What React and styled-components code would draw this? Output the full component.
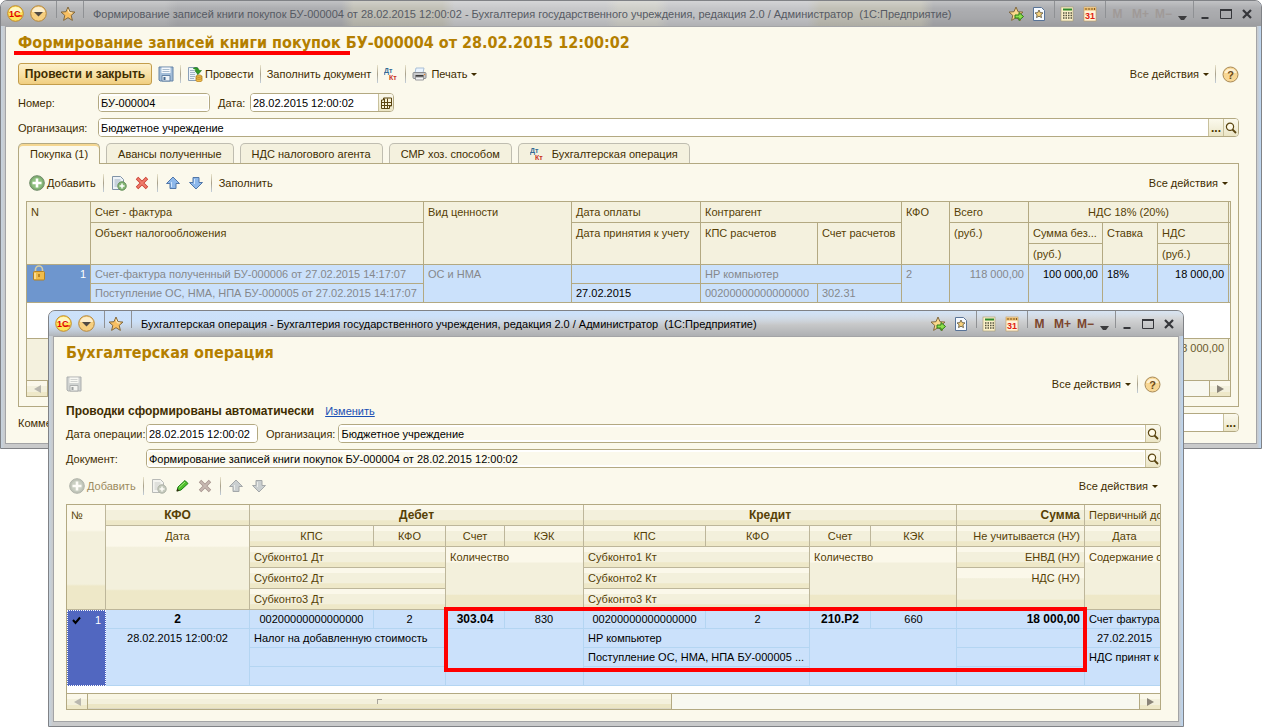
import React from 'react';
import styled, { createGlobalStyle, css } from 'styled-components';

const GlobalStyle = createGlobalStyle`
  * {
    box-sizing: border-box;
  }

  body {
    margin: 0;
    background: #ffffff;
    font-family: 'Liberation Sans', Arial, sans-serif;
    font-size: 11px;
    line-height: 16px;
    color: #3f2d00;
  }

  button,
  input {
    font: inherit;
    color: inherit;
    margin: 0;
  }

  svg {
    display: block;
    flex: none;
  }
`;

const boldFont = css`
  font-size: 12px;
  font-weight: bold;
`;

const Desktop = styled.div`
  position: relative;
  min-height: 100vh;
  overflow: hidden;
`;

const WindowFrame = styled.section`
  position: absolute;
  top: ${(p) => p.$top};
  left: ${(p) => p.$left};
  right: ${(p) => p.$right};
  padding: 0 4px 4px;
  border: 1px solid #808286;
  border-radius: 7px 7px 0 0;
  background: linear-gradient(90deg, #c6d3df, #c9cacb 4px, #c9cacb calc(100% - 4px), #bcd6f2);
`;

const TitleBar = styled.header`
  display: flex;
  align-items: center;
  height: 25px;
  margin: 0 -4px;
  padding: 0 4px 0 5px;
  border-radius: 6px 6px 0 0;
  color: ${(p) => (p.$active ? '#000000' : '#565a63')};
  background: ${(p) =>
    p.$active
      ? 'linear-gradient(179deg, rgba(203, 225, 251, 0.95) 25%, rgba(203, 225, 251, 0) 60%), linear-gradient(180deg, #e2e6ea, #c9cacb 50%, #aeb0b2)'
      : 'linear-gradient(180deg, rgba(255, 255, 255, 0.25), transparent 30%, rgba(0, 0, 0, 0.04) 70%, rgba(0, 0, 0, 0.1)), linear-gradient(90deg, #b7b8ba 0 13%, #adaeb1 14% 27%, #c1c0b6 28% 35%, #c7c8ca 36% 48%, #cfcfc9 49% 52%, #c4c5c8 53% 64%, #c1c0b6 65% 73%, #adaeb1 74%)'};
`;

const WindowTitle = styled.div`
  flex: 1;
  min-width: 0;
  overflow: hidden;
  white-space: pre;
  padding-left: 9px;
`;

const TitleButton = styled.button`
  ${boldFont}
  display: flex;
  align-items: center;
  justify-content: center;
  flex: none;
  width: ${(p) => p.$width || 23}px;
  height: 20px;
  padding: 0;
  border: 0;
  background: none;
  color: ${(p) => (p.disabled ? '#a09a98' : '#7b452d')};
`;

const TitleSeparator = styled.span`
  flex: none;
  align-self: flex-start;
  width: 5px;
  height: 17px;
  border-right: 1px solid #8f9194;
`;

const WindowBody = styled.div`
  border: 1px solid #a3a4a6;
  background: #fbf9ec;
  padding: 6px 17px 11px 12px;
`;

const Heading = styled.h1`
  font-family: 'DejaVu Sans Condensed', 'DejaVu Sans', sans-serif;
  font-stretch: condensed;
  font-weight: bold;
  font-size: 16px;
  line-height: 20px;
  margin: 0 0 10px;
  color: #b47f00;
  white-space: nowrap;
`;

const Underlined = styled.span`
  position: relative;

  &::after {
    content: '';
    position: absolute;
    left: -4px;
    right: -9px;
    bottom: -3px;
    height: 4px;
    background: #ff0000;
  }
`;

const CommandBar = styled.div`
  display: flex;
  align-items: center;
  gap: 6px;
  height: 22px;
`;

const TableBar = styled(CommandBar)`
  gap: 7px;
  height: 36px;
  padding: 0 3px;
`;

const Spacer = styled.div`
  flex: 1;
`;

const Separator = styled.span`
  width: 1px;
  height: 18px;
  background: linear-gradient(180deg, #e9e4cc, #a9a18a 50%, #c3cfdc);
`;

const PrimaryButton = styled.button`
  ${boldFont}
  width: 134px;
  height: 22px;
  padding: 0;
  border: 1px solid #c39d4b;
  border-radius: 3px;
  background: linear-gradient(180deg, #fcf0cd, #f7e0a3 55%, #f0ce80);
  color: #3f2d00;
  white-space: nowrap;
`;

const Command = styled.button`
  display: flex;
  align-items: center;
  gap: ${(p) => p.$gap || 2}px;
  padding: 0;
  border: 0;
  background: none;
  white-space: nowrap;
  color: ${(p) => (p.disabled ? '#9b8b5f' : '#3f2d00')};

  svg {
    opacity: ${(p) => (p.disabled ? 0.6 : 1)};
    filter: ${(p) => (p.disabled ? 'grayscale(0.8)' : 'none')};
  }
`;

const Row = styled.div`
  display: flex;
  align-items: center;
  min-height: ${(p) => p.$height || 19}px;
  margin-top: ${(p) => p.$top || 6}px;
`;

const Label = styled.label`
  flex: none;
  width: ${(p) => (p.$wide ? '80px' : 'auto')};
  min-width: 29px;
  margin: ${(p) => (p.$wide ? '0' : '0 3px 0 8px')};
  white-space: nowrap;
`;

const Field = styled.div`
  display: flex;
  flex: ${(p) => (p.$width ? `0 0 ${p.$width}px` : 1)};
  min-width: 0;
  height: 19px;
  border: 1px solid #b3a982;
  border-radius: 4px;
  overflow: hidden;
  background: ${(p) => (p.$plain ? '#fbf9ec' : '#ffffff')};

  input {
    flex: 1;
    min-width: 0;
    height: 17px;
    padding: 0 1px;
    border: 1px solid #ffffff;
    border-width: 2px 1px;
    background: transparent;
    color: #000000;
    outline: none;
  }
`;

const FieldButton = styled.button`
  display: flex;
  align-items: center;
  justify-content: center;
  flex: none;
  width: 15px;
  padding: 0;
  border: 0;
  border-left: 1px solid #c9c19c;
  background: linear-gradient(180deg, #fbf9ec, #f3f0dc 50%, #ebe5c4);
  color: #4c3800;
`;

const MoreButton = styled(FieldButton)`
  ${boldFont}
`;

const Tabs = styled.div`
  display: flex;
  gap: 6px;
  margin-top: 6px;
`;

const Tab = styled.button`
  position: relative;
  display: flex;
  align-items: center;
  gap: 7px;
  height: ${(p) => (p.$active ? 21 : 20)}px;
  margin-bottom: ${(p) => (p.$active ? -1 : 0)}px;
  padding: 0 11px;
  border: 1px solid ${(p) => (p.$active ? '#b3a982' : '#bfbdb0')};
  border-bottom: 0;
  border-radius: 5px 5px 0 0;
  background: ${(p) => (p.$active ? '#fbf9ec' : '#f4f1de')};
  box-shadow: ${(p) => (p.$active ? 'inset 0 2px #f5d791' : 'none')};
  white-space: nowrap;
  color: #3f2d00;
`;

const TabPanel = styled.div`
  border: 1px solid #b3a982;
  padding: 1px 7px 9px;
`;

const Grid = styled.div`
  border: 1px solid #b3a982;
  background: #ffffff;
  overflow: hidden;
`;

const Table = styled.table`
  width: 100%;
  table-layout: fixed;
  border-collapse: separate;
  border-spacing: 0;

  th,
  td {
    padding: 0 4px;
    text-align: left;
    vertical-align: top;
    font-weight: normal;
    white-space: nowrap;
    overflow: hidden;
  }

  th {
    height: 21px;
    line-height: 20px;
    color: #563f05;
  }

  td {
    height: 19px;
    line-height: 18px;
    color: #000000;
  }
`;

const PurchaseTable = styled(Table)`
  th,
  td {
    border-right: 1px solid #b3a982;
    border-bottom: 1px solid #b3a982;
  }

  th {
    background: #f4f1de;
  }

  td {
    background: #cbe1fb;
  }
`;

const EntryTable = styled(Table)`
  th {
    border-right: 1px solid #bdb69a;
    border-bottom: 1px solid #bdb69a;
    background: linear-gradient(180deg, #fbf8ea 24%, #f3f0dc 26% 76%, #eee8c8 78%);
  }

  td {
    border-right: 1px solid #b4d5f2;
    border-bottom: 1px solid #b4d5f2;
    background: #cbe1fb;
  }

  tr > .edge {
    border-right: 0;
    padding-right: 0;
  }
`;

const Head = styled.th`
  &&& {
    ${(p) => p.$bold && boldFont}
    text-align: ${(p) => p.$align || 'left'};
  }
`;

const Cell = styled.td`
  &&& {
    ${(p) => p.$bold && boldFont}
    text-align: ${(p) => p.$align || 'left'};
    color: ${(p) => (p.$muted ? '#85888c' : '#000000')};
  }
`;

const Edge = styled.td`
  &&& {
    padding: 0;
    border-right: 0;
  }
`;

const EdgeHead = styled.th`
  &&& {
    padding: 0;
    border-right: 0;
  }
`;

const RowMark = styled.td`
  &&& {
    background: ${(p) => (p.$focused ? '#5167c0' : '#6e96ce')};
    border: ${(p) => (p.$focused ? '1px dotted #ffffff' : '')};
    color: #ffffff;
  }
`;

const MarkLine = styled.div`
  display: flex;
  justify-content: space-between;
`;

const Blank = styled.td`
  &&& {
    height: ${(p) => p.$height}px;
    padding: 0;
    border-right: 0;
    border-bottom: ${(p) => (p.$line ? '1px solid #b3a982' : '0')};
    background: #ffffff;
  }
`;

const Total = styled.td`
  &&& {
    height: 41px;
    padding: ${(p) => (p.$edge ? '0' : '0 4px')};
    border-right-width: ${(p) => (p.$edge ? 0 : 1)}px;
    border-bottom: 0;
    background: #f4f1de;
    color: #6b5a2c;
    text-align: right;
  }
`;

const ScrollBar = styled.div`
  display: flex;
  height: 16px;
  border-top: 1px solid #b3a982;
  background: #f8f8f0;
`;

const ScrollButton = styled.button`
  display: flex;
  align-items: center;
  justify-content: center;
  flex: none;
  width: 21px;
  padding: 0;
  border: 0 solid #b3a982;
  border-width: ${(p) => (p.$end ? '0 0 0 1px' : '0 1px 0 0')};
  background: linear-gradient(180deg, #fbf8ea 30%, #f3f0dc 32% 70%, #eee8c8 72%);
`;

const ScrollThumb = styled.div`
  display: flex;
  align-items: center;
  justify-content: center;
  flex: 584;
  border-right: 1px solid #b3a982;
  background: linear-gradient(180deg, #f9f6e4 30%, #f3f0dc 32% 65%, #ebe5c4 68% 90%, #d5d2c4);

  &::before {
    content: '';
    width: 4px;
    height: 4px;
    border: 1px solid #a9a59a;
    border-width: 1px 0 0 1px;
  }
`;

const ScrollTrack = styled.div`
  flex: 468;
`;

// sits over the table rows, anchored to the grid's scroll area
const EntryArea = styled.div`
  position: relative;
`;

const Highlight = styled.div`
  position: absolute;
  left: 377px;
  top: 102px;
  width: 643px;
  height: 65px;
  border: 4px solid #ff0000;
  pointer-events: none;
`;

const InfoText = styled.strong`
  ${boldFont}
  margin-right: 11px;
`;

const Link = styled.a`
  color: #1a50b4;
  text-decoration: underline;
`;

/* ---------- icons ---------- */

const LogoIcon = () => (
  <svg width='17' height='17' viewBox='0 0 17 17'>
    <circle cx='8.5' cy='8.5' r='7.8' fill='#ffe25a' stroke='#c08a2a' />
    <path d='M2 7a6.6 6 0 0 1 13 0c-4 1.5-9 1.5-13 0z' fill='#fff7c0' />
    <text x='2' y='11.5' fontFamily='Liberation Sans' fontWeight='bold' fontSize='9' fill='#e00000'>
      1С
    </text>
    <path d='M9 11h6' stroke='#e00000' />
  </svg>
);

const MenuIcon = () => (
  <svg width='17' height='17' viewBox='0 0 17 17'>
    <circle cx='8.5' cy='8.5' r='7.8' fill='#f6cf80' stroke='#b5873c' />
    <path d='M2 7a6.6 6 0 0 1 13 0z' fill='#fdeecb' />
    <path d='M4 7h9l-4.5 4.500z' fill='#4f4a44' />
  </svg>
);

const starPath = 'M8 1l2 4.700 5 .4-3.800 3.300 1.200 5L8 11.700l-4.400 2.700 1.200-5L1 6.100l5-.4z';

const StarIcon = () => (
  <svg width='16' height='16' viewBox='0 0 16 16'>
    <path d={starPath} fill='#f8c063' stroke='#80683f' />
    <path d='M8 3.500l1.300 3.200 3 .3' stroke='#fff1cc' fill='none' />
  </svg>
);

const StarArrowIcon = () => (
  <svg width='16' height='16' viewBox='0 0 16 16'>
    <path d={starPath} fill='#fbd98c' stroke='#80683f' />
    <path d='M7 9h4V6.500l4.500 4-4.500 4V12H7z' fill='#8ee04d' stroke='#2b7a16' />
  </svg>
);

const PageStarIcon = () => (
  <svg width='16' height='16' viewBox='0 0 16 16'>
    <path d='M2.500 1.500h8l3 3v10h-11z' fill='#f6faff' stroke='#587397' />
    <path d='M8 4l1.200 2.600 2.800.3-2.100 1.900.6 2.800L8 10.200l-2.500 1.400.6-2.800L4 6.900l2.800-.3z' fill='#f8d27c' stroke='#5c5238' strokeWidth='.8' />
  </svg>
);

const CalcIcon = () => (
  <svg width='16' height='16' viewBox='0 0 16 16'>
    <rect x='2' y='1' width='12' height='14' fill='#fbf0c8' stroke='#a59a70' strokeWidth='.6' />
    <path d='M4 3.500h9' stroke='#2f8a2b' strokeWidth='2' />
    <path d='M4 7h9M4 9.500h9M4 12h9' stroke='#55533f' strokeWidth='1.400' strokeDasharray='1.500 1' />
  </svg>
);

const CalendarIcon = () => (
  <svg width='16' height='16' viewBox='0 0 16 16'>
    <rect x='2' y='1' width='12' height='14' fill='#fff3d8' stroke='#c09a5c' strokeWidth='.6' />
    <path d='M2 3h12' stroke='#e8b562' strokeWidth='3' />
    <path d='M4 2v2M7 2v2M10 2v2M12.500 2v2' stroke='#7e5c2a' />
    <text x='8' y='13' textAnchor='middle' fontFamily='Liberation Sans' fontSize='9' fill='#e02010'>
      31
    </text>
  </svg>
);

const ArrowDown = () => (
  <svg width='6' height='3' viewBox='0 0 6 3'>
    <path d='M0 0h6L3 3z' fill='#3f2d00' />
  </svg>
);

const SlotIcon = () => (
  <svg width='9' height='14' viewBox='0 0 9 14'>
    <path d='M0 9h9l-3 4H3z' fill='#3c3c3e' />
  </svg>
);

const MinimizeIcon = () => (
  <svg width='12' height='12' viewBox='0 0 12 12'>
    <path d='M2.500 10h7' stroke='#35363a' strokeWidth='2' />
  </svg>
);

const MaximizeIcon = () => (
  <svg width='12' height='12' viewBox='0 0 12 12'>
    <path d='M.5 1.500h11v9H.5z' fill='none' stroke='#35363a' />
    <path d='M0 2h12' stroke='#35363a' strokeWidth='2' />
  </svg>
);

const CloseIcon = () => (
  <svg width='12' height='12' viewBox='0 0 12 12'>
    <path d='M2 2l8 8M10 2l-8 8' stroke='#35363a' strokeWidth='2.200' />
  </svg>
);

const SaveIcon = () => (
  <svg width='16' height='16' viewBox='0 0 16 16'>
    <path d='M1 1h14v14H2l-1-1z' fill='#a3bdd8' stroke='#6483a6' />
    <path d='M3.500 1.500h9v5.500h-9z' fill='#f6f9fc' />
    <path d='M4.500 3.500h7M4.500 5.500h7' stroke='#a9bccf' />
    <path d='M4 9.500h8V15H4z' fill='#eef3f7' stroke='#6483a6' />
    <path d='M5.500 11h2v3h-2z' fill='#45688f' />
  </svg>
);

const PostIcon = () => (
  <svg width='16' height='16' viewBox='0 0 16 16'>
    <path d='M1.500 1.500h9v13h-9z' fill='#eef4fa' stroke='#8aa0b8' />
    <path d='M3 4.500h4M3 6.500h5M3 8.500h5M3 10.500h5M3 12.500h4' stroke='#a3b4c6' />
    <path d='M6 2.500c3-2 6-.5 6 2h2.500L11 8.500 7.800 4.500h2' fill='#2f9a26' stroke='#1d6d18' strokeWidth='.6' />
    <path d='M9 10.500c0-2 6-2 6 0v4c0 1.600-6 1.600-6 0z' fill='#f2bd4c' stroke='#b58322' strokeWidth='.8' />
    <path d='M9 12.500c1 1 5 1 6 0M9 10.500c1 1 5 1 6 0' stroke='#a87617' strokeWidth='.7' fill='none' />
  </svg>
);

const DtKtIcon = () => (
  <svg width='15' height='16' viewBox='0 0 15 16'>
    <g fontFamily='Liberation Sans' fontWeight='bold' fontSize='7'>
      <text x='0' y='7' fill='#336a94'>
        Дт
      </text>
      <text x='5' y='14' fill='#c8321c'>
        Кт
      </text>
    </g>
  </svg>
);

const PrintIcon = () => (
  <svg width='15' height='16' viewBox='0 0 15 16'>
    <path d='M4 2h8l-1 5H3z' fill='#eaf4ff' stroke='#a9bfd6' />
    <path d='M1 7.500q0-1 1-1h11q1 0 1 1v4q0 1-1 1H2q-1 0-1-1z' fill='#c9cacc' stroke='#8a8c90' />
    <path d='M3.500 9h8v2h-8z' fill='#3c3b3b' />
    <path d='M3.500 11h8v3h-8z' fill='#f4f4f4' stroke='#98999c' />
    <circle cx='12.500' cy='8.500' r='.7' fill='#e8822c' />
  </svg>
);

const HelpIcon = () => (
  <svg width='17' height='17' viewBox='0 0 17 17'>
    <circle cx='8.500' cy='8.500' r='7.500' fill='#f8d794' stroke='#a88a58' />
    <path d='M2.500 7a6.200 5.600 0 0 1 12 0z' fill='#fdf0d2' />
    <text x='8.500' y='12.500' textAnchor='middle' fontFamily='Liberation Sans' fontWeight='bold' fontSize='11' fill='#6d4a17'>
      ?
    </text>
  </svg>
);

const PickIcon = () => (
  <svg width='12' height='12' viewBox='0 0 12 12'>
    <path d='M3.500 1h8v8h-2v2.500h-8V3h2z' fill='#f7f2d8' stroke='#5a4510' />
    <path d='M1.500 5.500h10M1.500 8.500h10M4.500 1.500v10M7.500 1.500v10' stroke='#5a4510' />
  </svg>
);

const SearchIcon = () => (
  <svg width='12' height='12' viewBox='0 0 12 12'>
    <circle cx='5' cy='4.800' r='3.600' fill='#fffbe9' stroke='#5a4510' strokeWidth='1.200' />
    <path d='M7.500 7.500L11 11' stroke='#5a4510' strokeWidth='1.800' />
  </svg>
);

const AddIcon = () => (
  <svg width='16' height='16' viewBox='0 0 16 16'>
    <circle cx='8' cy='8' r='7.300' fill='#7fae72' stroke='#6f8a68' />
    <circle cx='8' cy='8' r='5.500' fill='#8fc080' />
    <path d='M8 3.500v9M3.500 8h9' stroke='#ffffff' strokeWidth='2.600' />
  </svg>
);

const CopyIcon = () => (
  <svg width='16' height='16' viewBox='0 0 16 16'>
    <path d='M1.500 1.500h8l3 3v10h-11z' fill='#eef3f7' stroke='#8093a6' />
    <path d='M3.500 5h6M3.500 7h6M3.500 9h4M3.500 11h3' stroke='#9fb0c0' />
    <circle cx='11' cy='11' r='4.200' fill='#86b877' stroke='#5f8a55' />
    <path d='M11 8.500v5M8.500 11h5' stroke='#ffffff' strokeWidth='1.500' />
  </svg>
);

const DeleteIcon = () => (
  <svg width='16' height='16' viewBox='0 0 16 16'>
    <path d='M3 3l10 10M13 3L3 13' stroke='#c8392c' strokeWidth='3.400' />
    <path d='M3.500 3.500l9 9M12.500 3.500l-9 9' stroke='#f07c6c' strokeWidth='1.800' />
  </svg>
);

const EditIcon = () => (
  <svg width='16' height='16' viewBox='0 0 16 16'>
    <path d='M3 13l1-4 7-6.500 3 3L7 12z' fill='#4fc02c' stroke='#1c7d14' />
    <path d='M5 9.500l6-5.500' stroke='#a8ec80' />
    <path d='M2.500 13.500l.7-3 2.300 2.300z' fill='#3a2c14' />
  </svg>
);

const MoveIcon = ({ down }) => (
  <svg width='16' height='16' viewBox='0 0 16 16'>
    <path
      d={down ? 'M5 2.500h6v5h3.500L8 14 1.500 7.500H5z' : 'M5 13.500h6v-5h3.500L8 2 1.500 8.500H5z'}
      fill='#8db8ea'
      stroke='#5177a8'
    />
    <path d={down ? 'M6.500 4v5' : 'M6.500 12V7'} stroke='#cfe4fb' />
  </svg>
);

const LockIcon = () => (
  <svg width='16' height='16' viewBox='0 0 16 16'>
    <path d='M4.500 8V4.500a3.500 3.500 0 0 1 7 0V8' fill='none' stroke='#d9cfa4' strokeWidth='1.600' />
    <rect x='2.500' y='6.500' width='11' height='8.500' rx='1' fill='#f0bc4a' stroke='#b58122' />
    <path d='M4 8v6' stroke='#fbe5a8' strokeWidth='1.500' />
    <path d='M8 9v3' stroke='#a8731a' strokeWidth='1.500' />
  </svg>
);

const CheckIcon = () => (
  <svg width='9' height='16' viewBox='0 0 9 16'>
    <path d='M1 9l2.500 3L8 6.500' fill='none' stroke='#000000' strokeWidth='2' />
  </svg>
);

const ScrollArrow = ({ right }) => (
  <svg width='7' height='8' viewBox='0 0 7 8'>
    <path d={right ? 'M0 0l7 4-7 4z' : 'M7 0L0 4l7 4z'} fill={right ? '#8a8478' : '#b9b7ae'} />
  </svg>
);

/* ---------- shared parts ---------- */

const AppWindow = ({ title, active, children, ...place }) => (
  <WindowFrame {...place}>
    <TitleBar $active={active}>
      <TitleButton $width={18} aria-label='1С'>
        <LogoIcon />
      </TitleButton>
      <TitleButton $width={28} aria-label='Меню'>
        <MenuIcon />
      </TitleButton>
      <TitleSeparator />
      <TitleButton $width={22} aria-label='Избранное'>
        <StarIcon />
      </TitleButton>
      <TitleSeparator />
      <WindowTitle>{title}</WindowTitle>
      <TitleButton aria-label='Добавить в избранное'>
        <StarArrowIcon />
      </TitleButton>
      <TitleButton aria-label='История'>
        <PageStarIcon />
      </TitleButton>
      <TitleSeparator />
      <TitleButton aria-label='Калькулятор'>
        <CalcIcon />
      </TitleButton>
      <TitleButton aria-label='Календарь'>
        <CalendarIcon />
      </TitleButton>
      <TitleSeparator />
      <TitleButton disabled={!active}>M</TitleButton>
      <TitleButton disabled={!active}>M+</TitleButton>
      <TitleButton disabled={!active}>M−</TitleButton>
      <TitleButton $width={14} aria-label='Ещё'>
        <SlotIcon />
      </TitleButton>
      <TitleSeparator />
      <TitleButton $width={21} aria-label='Свернуть'>
        <MinimizeIcon />
      </TitleButton>
      <TitleButton $width={21} aria-label='Развернуть'>
        <MaximizeIcon />
      </TitleButton>
      <TitleButton $width={21} aria-label='Закрыть'>
        <CloseIcon />
      </TitleButton>
    </TitleBar>
    <WindowBody>{children}</WindowBody>
  </WindowFrame>
);

const AllActions = () => (
  <Command $gap={4}>
    Все действия
    <ArrowDown />
  </Command>
);

const HelpButton = () => (
  <>
    <Separator />
    <Command aria-label='Справка'>
      <HelpIcon />
    </Command>
  </>
);

const SearchButton = () => (
  <FieldButton aria-label='Выбрать'>
    <SearchIcon />
  </FieldButton>
);

/* ---------- purchase book window ---------- */

const purchaseCols = [64, null, 148, 129, 117, 84, 48, 79, 74, 55, 71, 1];

const PurchaseGrid = () => (
  <Grid>
    <PurchaseTable>
      <colgroup>
        {purchaseCols.map((width, i) => (
          <col key={i} width={width || undefined} />
        ))}
      </colgroup>
      <thead>
        <tr>
          <Head rowSpan={3}>N</Head>
          <Head>Счет - фактура</Head>
          <Head rowSpan={3}>Вид ценности</Head>
          <Head>Дата оплаты</Head>
          <Head colSpan={2}>Контрагент</Head>
          <Head rowSpan={3}>КФО</Head>
          <Head>Всего</Head>
          <Head colSpan={3} $align='center'>
            НДС 18% (20%)
          </Head>
          <EdgeHead />
        </tr>
        <tr>
          <Head rowSpan={2}>Объект налогообложения</Head>
          <Head rowSpan={2}>Дата принятия к учету</Head>
          <Head rowSpan={2}>КПС расчетов</Head>
          <Head rowSpan={2}>Счет расчетов</Head>
          <Head rowSpan={2}>(руб.)</Head>
          <Head>Сумма без...</Head>
          <Head rowSpan={2}>Ставка</Head>
          <Head>НДС</Head>
          <EdgeHead />
        </tr>
        <tr>
          <Head>(руб.)</Head>
          <Head>(руб.)</Head>
          <EdgeHead />
        </tr>
      </thead>
      <tbody>
        <tr>
          <RowMark rowSpan={2}>
            <MarkLine>
              <LockIcon />
              <span>1</span>
            </MarkLine>
          </RowMark>
          <Cell $muted>Счет-фактура полученный БУ-000006 от 27.02.2015 14:17:07</Cell>
          <Cell $muted rowSpan={2}>
            ОС и НМА
          </Cell>
          <Cell />
          <Cell $muted colSpan={2}>
            HP компьютер
          </Cell>
          <Cell $muted rowSpan={2}>
            2
          </Cell>
          <Cell $muted rowSpan={2} $align='right'>
            118 000,00
          </Cell>
          <Cell rowSpan={2} $align='right'>
            100 000,00
          </Cell>
          <Cell rowSpan={2}>18%</Cell>
          <Cell rowSpan={2} $align='right'>
            18 000,00
          </Cell>
          <Edge rowSpan={2} />
        </tr>
        <tr>
          <Cell $muted>Поступление ОС, НМА, НПА БУ-000005 от 27.02.2015 14:17:07</Cell>
          <Cell>27.02.2015</Cell>
          <Cell $muted>00200000000000000</Cell>
          <Cell $muted>302.31</Cell>
        </tr>
        <tr>
          <Blank $height={36} $line colSpan={12} />
        </tr>
      </tbody>
      <tfoot>
        <tr>
          <Total colSpan={10} />
          <Total>18 000,00</Total>
          <Total $edge />
        </tr>
      </tfoot>
    </PurchaseTable>
    <ScrollBar>
      <ScrollButton aria-label='Влево'>
        <ScrollArrow />
      </ScrollButton>
      <ScrollTrack />
      <ScrollButton $end aria-label='Вправо'>
        <ScrollArrow right />
      </ScrollButton>
    </ScrollBar>
  </Grid>
);

const PurchaseWindow = () => (
  <AppWindow
    $top='0'
    $left='0'
    $right='0'
    title='Формирование записей книги покупок БУ-000004 от 28.02.2015 12:00:02 - Бухгалтерия государственного учреждения, редакция 2.0 / Администратор  (1С:Предприятие)'
  >
    <Heading>
      <Underlined>Формирование записей книги покупок</Underlined> БУ-000004 от 28.02.2015 12:00:02
    </Heading>
    <CommandBar>
      <PrimaryButton>Провести и закрыть</PrimaryButton>
      <Command aria-label='Записать'>
        <SaveIcon />
      </Command>
      <Separator />
      <Command>
        <PostIcon />
        Провести
      </Command>
      <Separator />
      <Command>Заполнить документ</Command>
      <Separator />
      <Command aria-label='Проводки'>
        <DtKtIcon />
      </Command>
      <Separator />
      <Command $gap={4}>
        <PrintIcon />
        Печать
        <ArrowDown />
      </Command>
      <Spacer />
      <AllActions />
      <HelpButton />
    </CommandBar>
    <Row $top={8}>
      <Label $wide htmlFor='number'>
        Номер:
      </Label>
      <Field $width={112} $plain>
        <input id='number' defaultValue='БУ-000004' />
      </Field>
      <Label htmlFor='date'>Дата:</Label>
      <Field $width={144}>
        <input id='date' defaultValue='28.02.2015 12:00:02' />
        <FieldButton aria-label='Календарь'>
          <PickIcon />
        </FieldButton>
      </Field>
    </Row>
    <Row>
      <Label $wide htmlFor='org'>
        Организация:
      </Label>
      <Field>
        <input id='org' defaultValue='Бюджетное учреждение' />
        <MoreButton>...</MoreButton>
        <SearchButton />
      </Field>
    </Row>
    <Tabs>
      <Tab $active>Покупка (1)</Tab>
      <Tab>Авансы полученные</Tab>
      <Tab>НДС налогового агента</Tab>
      <Tab>СМР хоз. способом</Tab>
      <Tab>
        <DtKtIcon />
        Бухгалтерская операция
      </Tab>
    </Tabs>
    <TabPanel>
      <TableBar>
        <Command>
          <AddIcon />
          Добавить
        </Command>
        <Separator />
        <Command aria-label='Скопировать'>
          <CopyIcon />
        </Command>
        <Command aria-label='Удалить'>
          <DeleteIcon />
        </Command>
        <Separator />
        <Command aria-label='Вверх'>
          <MoveIcon />
        </Command>
        <Command aria-label='Вниз'>
          <MoveIcon down />
        </Command>
        <Separator />
        <Command>Заполнить</Command>
        <Spacer />
        <AllActions />
      </TableBar>
      <PurchaseGrid />
    </TabPanel>
    <Row>
      <Label $wide htmlFor='comment'>
        Комментарий:
      </Label>
      <Field>
        <input id='comment' />
        <MoreButton>...</MoreButton>
      </Field>
    </Row>
  </AppWindow>
);

/* ---------- accounting entry window ---------- */

const entryCols = [39, 144, 124, 72, 59, 79, 122, 104, 61, 86, 128, null];

const EntryGrid = () => (
  <Grid>
    <EntryArea>
      <EntryTable>
        <colgroup>
          {entryCols.map((width, i) => (
            <col key={i} width={width || undefined} />
          ))}
        </colgroup>
        <thead>
          <tr>
            <Head rowSpan={5}>№</Head>
            <Head $bold $align='center'>
              КФО
            </Head>
            <Head $bold $align='center' colSpan={4}>
              Дебет
            </Head>
            <Head $bold $align='center' colSpan={4}>
              Кредит
            </Head>
            <Head $bold $align='right'>
              Сумма
            </Head>
            <Head className='edge'>Первичный до</Head>
          </tr>
          <tr>
            <Head rowSpan={4} $align='center'>
              Дата
            </Head>
            {['Дт', 'Кт'].map((side) => (
              <React.Fragment key={side}>
                <Head $align='center'>КПС</Head>
                <Head $align='center'>КФО</Head>
                <Head $align='center'>Счет</Head>
                <Head $align='center'>КЭК</Head>
              </React.Fragment>
            ))}
            <Head $align='right'>Не учитывается (НУ)</Head>
            <Head className='edge' $align='center'>
              Дата
            </Head>
          </tr>
          <tr>
            <Head colSpan={2}>Субконто1 Дт</Head>
            <Head colSpan={2} rowSpan={3}>
              Количество
            </Head>
            <Head colSpan={2}>Субконто1 Кт</Head>
            <Head colSpan={2} rowSpan={3}>
              Количество
            </Head>
            <Head $align='right'>ЕНВД (НУ)</Head>
            <Head className='edge' rowSpan={3}>
              Содержание о
            </Head>
          </tr>
          <tr>
            <Head colSpan={2}>Субконто2 Дт</Head>
            <Head colSpan={2}>Субконто2 Кт</Head>
            <Head rowSpan={2} $align='right'>
              НДС (НУ)
            </Head>
          </tr>
          <tr>
            <Head colSpan={2}>Субконто3 Дт</Head>
            <Head colSpan={2}>Субконто3 Кт</Head>
          </tr>
        </thead>
        <tbody>
          <tr>
            <RowMark $focused rowSpan={4}>
              <MarkLine>
                <CheckIcon />
                <span>1</span>
              </MarkLine>
            </RowMark>
            <Cell $bold $align='center'>
              2
            </Cell>
            <Cell $align='center'>00200000000000000</Cell>
            <Cell $align='center'>2</Cell>
            <Cell $bold $align='center'>
              303.04
            </Cell>
            <Cell $align='center'>830</Cell>
            <Cell $align='center'>00200000000000000</Cell>
            <Cell $align='center'>2</Cell>
            <Cell $bold $align='center'>
              210.P2
            </Cell>
            <Cell $align='center'>660</Cell>
            <Cell $bold $align='right'>
              18 000,00
            </Cell>
            <Cell className='edge'>Счет фактура</Cell>
          </tr>
          <tr>
            <Cell rowSpan={3} $align='center'>
              28.02.2015 12:00:02
            </Cell>
            <Cell colSpan={2}>Налог на добавленную стоимость</Cell>
            <Cell colSpan={2} rowSpan={3} />
            <Cell colSpan={2}>HP компьютер</Cell>
            <Cell colSpan={2} rowSpan={3} />
            <Cell />
            <Cell className='edge' $align='center'>
              27.02.2015
            </Cell>
          </tr>
          <tr>
            <Cell colSpan={2} />
            <Cell colSpan={2}>Поступление ОС, НМА, НПА БУ-000005 ...</Cell>
            <Cell />
            <Cell className='edge' rowSpan={2}>
              НДС принят к
            </Cell>
          </tr>
          <tr>
            <Cell colSpan={2} />
            <Cell colSpan={2} />
            <Cell />
          </tr>
          <tr>
            <Blank $height={7} colSpan={12} />
          </tr>
        </tbody>
      </EntryTable>
      <Highlight />
    </EntryArea>
    <ScrollBar>
      <ScrollButton aria-label='Влево'>
        <ScrollArrow />
      </ScrollButton>
      <ScrollThumb />
      <ScrollTrack />
      <ScrollButton $end aria-label='Вправо'>
        <ScrollArrow right />
      </ScrollButton>
    </ScrollBar>
  </Grid>
);

const EntryWindow = () => (
  <AppWindow
    active
    $top='310px'
    $left='48px'
    $right='78px'
    title='Бухгалтерская операция - Бухгалтерия государственного учреждения, редакция 2.0 / Администратор  (1С:Предприятие)'
  >
    <Heading>Бухгалтерская операция</Heading>
    <CommandBar>
      <Command disabled aria-label='Записать'>
        <SaveIcon />
      </Command>
      <Spacer />
      <AllActions />
      <HelpButton />
    </CommandBar>
    <Row $top={8} $height={16}>
      <InfoText>Проводки сформированы автоматически</InfoText>
      <Link href='#edit'>Изменить</Link>
    </Row>
    <Row $top={5}>
      <Label $wide htmlFor='entry-date'>
        Дата операции:
      </Label>
      <Field $width={112}>
        <input id='entry-date' defaultValue='28.02.2015 12:00:02' />
      </Field>
      <Label htmlFor='entry-org'>Организация:</Label>
      <Field $plain>
        <input id='entry-org' defaultValue='Бюджетное учреждение' />
        <SearchButton />
      </Field>
    </Row>
    <Row>
      <Label $wide htmlFor='entry-doc'>
        Документ:
      </Label>
      <Field $plain>
        <input id='entry-doc' defaultValue='Формирование записей книги покупок БУ-000004 от 28.02.2015 12:00:02' />
        <SearchButton />
      </Field>
    </Row>
    <TableBar>
      <Command disabled>
        <AddIcon />
        Добавить
      </Command>
      <Separator />
      <Command disabled aria-label='Скопировать'>
        <CopyIcon />
      </Command>
      <Command aria-label='Изменить'>
        <EditIcon />
      </Command>
      <Command disabled aria-label='Удалить'>
        <DeleteIcon />
      </Command>
      <Separator />
      <Command disabled aria-label='Вверх'>
        <MoveIcon />
      </Command>
      <Command disabled aria-label='Вниз'>
        <MoveIcon down />
      </Command>
      <Spacer />
      <AllActions />
    </TableBar>
    <EntryGrid />
  </AppWindow>
);

const App = () => {
  return (
    <Desktop>
      <GlobalStyle />
      <PurchaseWindow />
      <EntryWindow />
    </Desktop>
  );
};

export default App;
